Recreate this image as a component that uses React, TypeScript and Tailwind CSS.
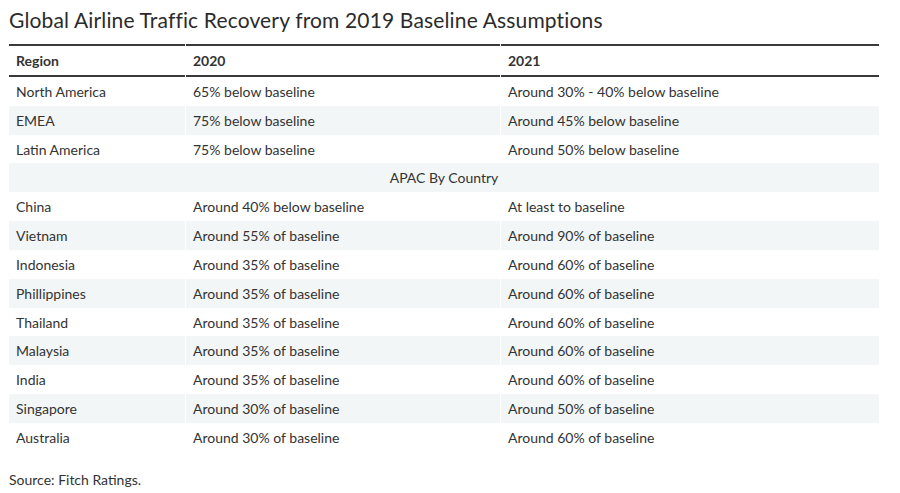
import React from "react";

const rows: (string[] | string)[] = [
  ["North America", "65% below baseline", "Around 30% - 40% below baseline"],
  ["EMEA", "75% below baseline", "Around 45% below baseline"],
  ["Latin America", "75% below baseline", "Around 50% below baseline"],
  "APAC By Country",
  ["China", "Around 40% below baseline", "At least to baseline"],
  ["Vietnam", "Around 55% of baseline", "Around 90% of baseline"],
  ["Indonesia", "Around 35% of baseline", "Around 60% of baseline"],
  ["Phillippines", "Around 35% of baseline", "Around 60% of baseline"],
  ["Thailand", "Around 35% of baseline", "Around 60% of baseline"],
  ["Malaysia", "Around 35% of baseline", "Around 60% of baseline"],
  ["India", "Around 35% of baseline", "Around 60% of baseline"],
  ["Singapore", "Around 30% of baseline", "Around 50% of baseline"],
  ["Australia", "Around 30% of baseline", "Around 60% of baseline"],
];

export default function App() {
  return (
    <div
      className="w-[900px] h-[493px] bg-white text-[#333333] pl-[9px] pt-[8px]"
      style={{ fontFamily: "Lato, 'Open Sans', sans-serif" }}
    >
      <h1 className="text-[21px] leading-[24px] font-normal tracking-[0.15px] text-[#2b2b2b]">
        Global Airline Traffic Recovery from 2019 Baseline Assumptions
      </h1>
      <div className="mt-[12px] w-[870px] grid grid-cols-[176px_314px_378px] gap-x-px text-[14px]">
        {["Region", "2020", "2021"].map((h) => (
          <div
            key={h}
            className="h-[33px] border-t-2 border-b-2 border-[#3a3a3a] flex items-center px-[7px] font-bold"
          >
            {h}
          </div>
        ))}
        {rows.map((r, i) => {
          const zebra = i % 2 === 1 ? "bg-[#f2f6f6]" : "bg-white";
          if (typeof r === "string") {
            return (
              <div
                key={i}
                className={`col-span-3 h-[28.84px] flex items-center justify-center ${zebra}`}
              >
                {r}
              </div>
            );
          }
          return r.map((c, j) => (
            <div
              key={`${i}-${j}`}
              className={`h-[28.84px] flex items-center px-[7px] ${zebra}`}
            >
              {c}
            </div>
          ));
        })}
      </div>
      <div className="mt-[18px] text-[14px] leading-[20px]">Source: Fitch Ratings.</div>
    </div>
  );
}
